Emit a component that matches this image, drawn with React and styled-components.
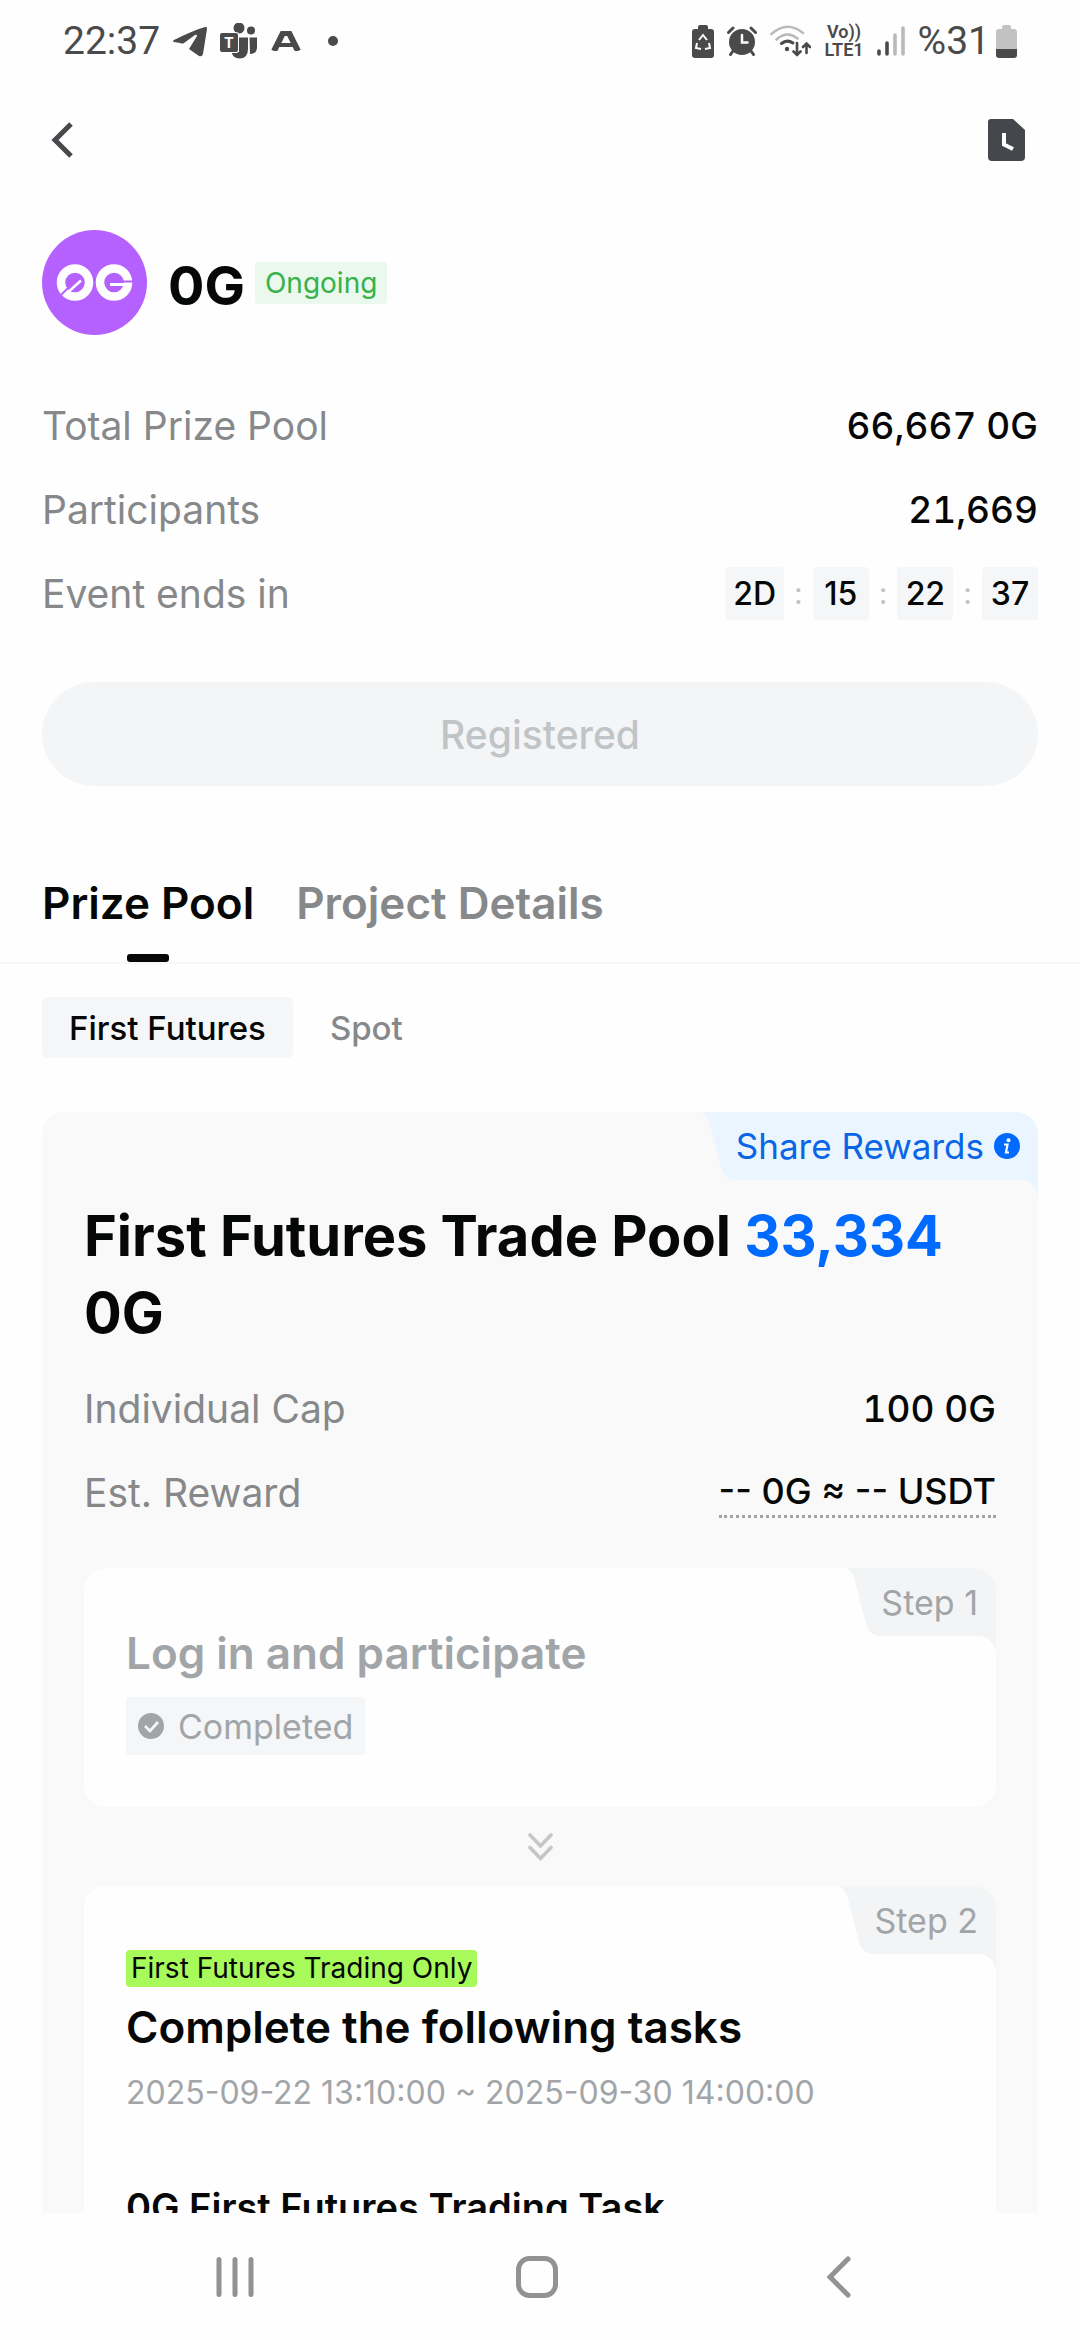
import React, { useState } from "react";
import styled, { createGlobalStyle } from "styled-components";

const GlobalStyle = createGlobalStyle`
  * {
    box-sizing: border-box;
  }
  body {
    margin: 0;
    background: #fefefe;
    color: #060707;
    font-family: Inter, "Liberation Sans", sans-serif;
  }
  button {
    margin: 0;
    padding: 0;
    border: 0;
    background: none;
    color: inherit;
    font: inherit;
  }
  h1, h2, h3, p, dl, dd {
    margin: 0;
  }
  svg {
    display: block;
    flex: none;
  }
`;

const Screen = styled.div`
  display: flex;
  flex-direction: column;
  height: 100vh;
`;

const StatusBar = styled.div`
  display: flex;
  flex: none;
  align-items: center;
  justify-content: space-between;
  height: 82px;
  padding: 0 63px;
  color: #4a4a4a;
  font-family: Roboto, sans-serif;
  font-size: 39px;
`;

const StatusGroup = styled.div`
  display: flex;
  align-items: center;
  gap: ${({ $gap }) => $gap}px;
`;

const Volte = styled.div`
  font-size: 18px;
  font-weight: 600;
  line-height: 18px;
  text-align: center;
`;

const Header = styled.header`
  display: flex;
  flex: none;
  align-items: center;
  justify-content: space-between;
  height: 116px;
  padding: 0 55px 0 50px;
`;

const Content = styled.main`
  flex: 1;
  min-height: 0;
  overflow: hidden;
`;

const Summary = styled.section`
  padding: 32px 42px 58px;
`;

const Project = styled.div`
  display: flex;
  align-items: center;
  margin-bottom: 48px;
`;

const ProjectName = styled.h1`
  margin: 0 10px 0 21px;
  padding-top: 6px;
  font-size: 54px;
  font-weight: 700;
`;

const Status = styled.span`
  padding: 0 10px;
  border-radius: 4px;
  background: #ebf8ed;
  color: #36b24a;
  font-size: 28px;
  line-height: 42px;
`;

const Row = styled.div`
  display: flex;
  align-items: center;
  justify-content: space-between;
  height: 84px;
  font-size: 39px;
`;

const Label = styled.dt`
  color: #86888a;
`;

const Value = styled.dd`
  font-size: 37px;
  font-weight: 500;
  font-variant-numeric: tabular-nums;
`;

const Estimate = styled(Value)`
  border-bottom: 3px dotted #a2a5a8;
  font-size: 36px;
  font-variant-numeric: normal;
  line-height: 48px;
`;

const Countdown = styled.dd`
  display: flex;
  align-items: center;
  gap: 10px;
  color: #c1c3c5;
  font-size: 30px;
`;

const TimeBox = styled.span`
  min-width: 56px;
  padding: 0 8px;
  border-radius: 4px;
  background: #f4f6f7;
  color: #060707;
  font-size: 32px;
  font-weight: 500;
  line-height: 53px;
  text-align: center;
`;

const RegisterButton = styled.button`
  width: 100%;
  height: 104px;
  margin-top: 47px;
  border-radius: 52px;
  background: #f4f5f7;
  color: #c1c4c7;
  font-size: 39px;
  font-weight: 500;
`;

const Tabs = styled.div`
  display: flex;
  gap: 42px;
  padding: 0 42px;
  border-bottom: 2px solid #f5f6f6;
`;

const Tab = styled.button`
  position: relative;
  height: 118px;
  color: ${({ $active }) => ($active ? "#060707" : "#86888a")};
  font-size: 44px;
  font-weight: 600;

  &::after {
    content: "";
    position: absolute;
    bottom: 0;
    left: 50%;
    width: 42px;
    height: 8px;
    margin-left: -21px;
    border-radius: 3px;
    background: ${({ $active }) => ($active ? "#060707" : "transparent")};
  }
`;

const Chips = styled.div`
  display: flex;
  gap: 10px;
  padding: 33px 42px 54px;
`;

const Chip = styled.button`
  height: 61px;
  padding: 0 27px;
  border-radius: 6px;
  background: ${({ $active }) => ($active ? "#f4f6f7" : "transparent")};
  color: ${({ $active }) => ($active ? "#060707" : "#86888a")};
  font-size: 33px;
  font-weight: 500;
`;

const PoolCard = styled.section`
  position: relative;
  margin: 0 42px;
  padding: 86px 42px 42px;
  border-radius: 22px;
  background: #f9f9f9;
`;

const PoolTitle = styled.h2`
  margin-bottom: 14px;
  font-size: 56px;
  font-weight: 700;
  line-height: 77px;

  em {
    color: #006aff;
    font-style: normal;
  }
`;

const StepCard = styled.article`
  position: relative;
  padding: 57px 42px 52px;
  border-radius: 22px;
  background: #fefefe;
`;

const Steps = styled.div`
  margin-top: 34px;
`;

const StepTitle = styled.h3`
  color: ${({ $done }) => ($done ? "#a2a5a8" : "#060707")};
  font-size: 44px;
  font-weight: 600;
  line-height: 56px;
`;

const StepGap = styled.div`
  display: flex;
  align-items: center;
  justify-content: center;
  height: 79px;
`;

const Completed = styled.div`
  display: inline-flex;
  align-items: center;
  gap: 14px;
  height: 58px;
  margin-top: 16px;
  padding: 0 12px;
  border-radius: 4px;
  background: #f4f6f7;
  color: #a2a5a8;
  font-size: 34px;
  vertical-align: top;
`;

const OnlyRow = styled.div`
  display: flex;
  align-items: center;
  height: 50px;
  margin-bottom: 6px;
`;

const Only = styled.mark`
  padding: 0 5px;
  border-radius: 4px;
  background: #a8fa5a;
  color: #060707;
  font-size: 28px;
  line-height: 37px;
`;

const Period = styled.p`
  margin: 18px 0 70px;
  color: #a2a5a8;
  font-size: 32px;
  line-height: 40px;
`;

const TaskTitle = styled.h3`
  font-size: 38px;
  font-weight: 600;
  line-height: 48px;
`;

const CornerWrap = styled.div`
  position: absolute;
  top: 0;
  right: 0;
  display: flex;
  color: ${({ $bg }) => $bg};
`;

const CornerBody = styled.div`
  position: relative;
  display: flex;
  align-items: center;
  gap: 10px;
  height: 68px;
  padding-right: 18px;
  border-top-right-radius: 22px;
  background: ${({ $bg }) => $bg};
  color: ${({ $color }) => $color};
  font-size: ${({ $size }) => $size}px;

  &::after {
    content: "";
    position: absolute;
    top: 100%;
    right: 0;
    width: 18px;
    height: 18px;
    background: radial-gradient(circle at 0 100%, transparent 18px, ${({ $bg }) => $bg} 18px);
  }
`;

const NavBar = styled.nav`
  display: grid;
  flex: none;
  grid-template-columns: repeat(3, 1fr);
  height: 127px;
  padding: 0 90px 0 84px;
  color: #929292;

  button {
    display: flex;
    align-items: center;
    justify-content: center;
  }
`;

const CornerTag = ({ bg, color, size, children }) => (
  <CornerWrap $bg={bg}>
    <svg width="36" height="68" viewBox="0 0 36 68" fill="currentColor">
      <path d="M0 0C7 2 9 8 11 17L20 52C22 62 27 68 36 68V0Z" />
    </svg>
    <CornerBody $bg={bg} $color={color} $size={size}>
      {children}
    </CornerBody>
  </CornerWrap>
);

const TelegramIcon = () => (
  <svg width="34" height="31" viewBox="0 0 34 31" fill="currentColor">
    <path d="M1 14C11 9 22 4 32 1Q34 0 34 3L30 28Q29 31 26 30L16 23L24 10Q24 8 22 9L11 17Q9 18 7 17L1 16Q-1 15 1 14Z" />
  </svg>
);

const TeamsIcon = () => (
  <svg width="38" height="36" viewBox="0 0 38 36" fill="currentColor">
    <circle cx="19" cy="5" r="5.5" />
    <circle cx="31" cy="7.500" r="4" />
    <path d="M29.500 14.500H37V24Q37 31 30 31Z" />
    <path d="M19 14.500H28V26Q28 35.500 19.500 35.500Q13 35.500 11.500 29H19Z" />
    <rect x="-1" y="9" width="20" height="21" rx="3" fill="#fefefe" />
    <rect x="0" y="10" width="18" height="19" rx="2" />
    <text x="9" y="25" fill="#fefefe" fontFamily="Roboto" fontSize="15" fontWeight="700" textAnchor="middle">
      T
    </text>
  </svg>
);

const WideAIcon = () => (
  <svg width="30" height="20" viewBox="0 0 30 20" fill="none" stroke="currentColor" strokeWidth="6">
    <path d="M3 20L12 2H18L27 20" />
    <path d="M8 14H22" strokeWidth="4" />
  </svg>
);

const RecycleBatteryIcon = () => (
  <svg width="22" height="33" viewBox="0 0 22 33" fill="currentColor">
    <rect x="6" y="0" width="10" height="6" rx="2" />
    <rect x="0" y="4" width="22" height="29" rx="3" />
    <path d="M7 15L11 10L15 15M17 18L18 23L13 24M9 24L4 23L5 18" fill="none" stroke="#fefefe" strokeWidth="2" />
    <path d="M11 13L16 22H6Z" />
  </svg>
);

const AlarmIcon = () => (
  <svg width="30" height="30" viewBox="0 0 30 30" fill="none" stroke="currentColor" strokeLinecap="round">
    <circle cx="15" cy="16" r="13" fill="currentColor" stroke="none" />
    <path d="M1.500 6.500L6 2M28.500 6.500L24 2M6 25L3.500 28.500M24 25L26.500 28.500" strokeWidth="3" />
    <path d="M15 9V16.500H20.500" stroke="#fefefe" strokeWidth="2.500" />
  </svg>
);

const WifiIcon = () => (
  <svg width="41" height="32" viewBox="0 0 41 32" fill="none" strokeWidth="2.600" strokeLinecap="round">
    <path d="M1.500 9Q17 -5 33 8M6.500 14.500Q17 5 27.500 13.500" stroke="#bababa" />
    <path d="M11.500 18.500Q17 14 23 18" stroke="currentColor" strokeWidth="3" />
    <circle cx="17" cy="24" r="2.200" fill="currentColor" />
    <path d="M27 18V30M23.500 26.500L27 30L30.500 26.500M36.500 28V18.500M33 22L36.500 18.500L40 22" stroke="currentColor" />
  </svg>
);

const SignalIcon = () => (
  <svg width="28" height="30" viewBox="0 0 28 30" strokeWidth="3.600" strokeLinecap="round">
    <path d="M2 25V28M10 17V28" stroke="currentColor" />
    <path d="M18 9V28M26 2V28" stroke="#bababa" />
  </svg>
);

const BatteryIcon = () => (
  <svg width="21" height="33" viewBox="0 0 21 33">
    <path d="M6 2Q6 0 8 0H13Q15 0 15 2V4H18Q21 4 21 7V24H0V7Q0 4 3 4H6Z" fill="#c2c2c2" />
    <path d="M0 24H21V30Q21 33 18 33H3Q0 33 0 30Z" fill="currentColor" />
  </svg>
);

const BackIcon = () => (
  <svg width="26" height="36" viewBox="0 0 26 36" fill="none" stroke="#48494c" strokeWidth="5">
    <path d="M21 2L5 18L21 34" />
  </svg>
);

const RecordIcon = () => (
  <svg width="37" height="42" viewBox="0 0 37 42">
    <path d="M3 0H25L37 11V38Q37 42 33 42H4Q0 42 0 38V3Q0 0 3 0Z" fill="#44474b" />
    <path d="M16 14V25.500L25 30" fill="none" stroke="#fefefe" strokeWidth="4" />
  </svg>
);

const TokenLogo = () => (
  <svg width="105" height="105" viewBox="0 0 105 105" fill="none">
    <circle cx="52.500" cy="52.500" r="52.500" fill="#b461ff" />
    <g stroke="#fefefe" strokeWidth="8.500">
      <circle cx="33" cy="52.500" r="14" />
      <circle cx="72" cy="52.500" r="14" />
    </g>
    <path d="M18 66L32 52" stroke="#b461ff" strokeWidth="2" />
    <path d="M23 65L39 50.500" stroke="#fefefe" strokeWidth="2.500" />
    <path d="M81 51.500H92" stroke="#b461ff" strokeWidth="2" />
    <path d="M68 54.500H84" stroke="#fefefe" strokeWidth="3" />
  </svg>
);

const InfoIcon = () => (
  <svg width="26" height="26" viewBox="0 0 26 26">
    <circle cx="13" cy="13" r="13" fill="#006aff" />
    <circle cx="14.500" cy="7.300" r="2" fill="#fefefe" />
    <path d="M10 11.500H13.500L12 19.500H15" fill="none" stroke="#fefefe" strokeWidth="2.200" />
  </svg>
);

const CheckIcon = () => (
  <svg width="26" height="26" viewBox="0 0 26 26">
    <circle cx="13" cy="13" r="13" fill="#a2a5a8" />
    <path d="M7 13L12 18L20 9" fill="none" stroke="#f4f6f7" strokeWidth="2.800" />
  </svg>
);

const DoubleDownIcon = () => (
  <svg width="25" height="28" viewBox="0 0 25 28" fill="none" stroke="#c4c6c8" strokeWidth="3.600" strokeLinecap="round">
    <path d="M2 2L12.500 13L23 2M2 14.500L12.500 25.500L23 14.500" />
  </svg>
);

const RecentsIcon = () => (
  <svg width="38" height="42" viewBox="0 0 38 42" stroke="currentColor" strokeWidth="5" strokeLinecap="round">
    <path d="M3 3.500V38.500M19 3.500V38.500M35 3.500V38.500" />
  </svg>
);

const HomeIcon = () => (
  <svg width="42" height="42" viewBox="0 0 42 42" fill="none" stroke="currentColor" strokeWidth="5">
    <rect x="2.500" y="2.500" width="37" height="37" rx="11" />
  </svg>
);

const NavBackIcon = () => (
  <svg width="24" height="42" viewBox="0 0 24 42" fill="none" stroke="currentColor" strokeWidth="5" strokeLinecap="round">
    <path d="M21 3L3 21L21 39" />
  </svg>
);

const time = ["2D", "15", "22", "37"];
const tabs = ["Prize Pool", "Project Details"];
const pools = ["First Futures", "Spot"];

const App = () => {
  const [tab, setTab] = useState(tabs[0]);
  const [pool, setPool] = useState(pools[0]);

  return (
    <Screen>
      <GlobalStyle />
      <StatusBar>
        <StatusGroup $gap={13}>
          <span>22:37</span>
          <TelegramIcon />
          <TeamsIcon />
          <WideAIcon />
          <svg width="38" height="10" viewBox="0 0 38 10" fill="currentColor">
            <circle cx="19" cy="5" r="5" />
          </svg>
        </StatusGroup>
        <StatusGroup $gap={13}>
          <RecycleBatteryIcon />
          <AlarmIcon />
          <WifiIcon />
          <Volte>
            Vo))
            <br />
            LTE1
          </Volte>
          <SignalIcon />
          <StatusGroup $gap={6}>
            <span>%31</span>
            <BatteryIcon />
          </StatusGroup>
        </StatusGroup>
      </StatusBar>
      <Header>
        <button aria-label="Back">
          <BackIcon />
        </button>
        <button aria-label="Records">
          <RecordIcon />
        </button>
      </Header>
      <Content>
        <Summary>
          <Project>
            <TokenLogo />
            <ProjectName>0G</ProjectName>
            <Status>Ongoing</Status>
          </Project>
          <dl>
            <Row>
              <Label>Total Prize Pool</Label>
              <Value>66,667 0G</Value>
            </Row>
            <Row>
              <Label>Participants</Label>
              <Value>21,669</Value>
            </Row>
            <Row>
              <Label>Event ends in</Label>
              <Countdown>
                {time.map((part, i) => (
                  <React.Fragment key={part}>
                    {i > 0 && <span>:</span>}
                    <TimeBox>{part}</TimeBox>
                  </React.Fragment>
                ))}
              </Countdown>
            </Row>
          </dl>
          <RegisterButton>Registered</RegisterButton>
        </Summary>
        <Tabs>
          {tabs.map(name => (
            <Tab key={name} $active={name === tab} onClick={() => setTab(name)}>
              {name}
            </Tab>
          ))}
        </Tabs>
        <Chips>
          {pools.map(name => (
            <Chip key={name} $active={name === pool} onClick={() => setPool(name)}>
              {name}
            </Chip>
          ))}
        </Chips>
        <PoolCard>
          <CornerTag bg="#ebf5ff" color="#0a66e4" size={35}>
            Share Rewards
            <InfoIcon />
          </CornerTag>
          <PoolTitle>
            First Futures Trade Pool <em>33,334</em> 0G
          </PoolTitle>
          <dl>
            <Row>
              <Label>Individual Cap</Label>
              <Value>100 0G</Value>
            </Row>
            <Row>
              <Label>Est. Reward</Label>
              <Estimate>-- 0G ≈ -- USDT</Estimate>
            </Row>
          </dl>
          <Steps>
            <StepCard>
              <CornerTag bg="#f2f4f5" color="#a2a5a8" size={34}>
                Step 1
              </CornerTag>
              <StepTitle $done>Log in and participate</StepTitle>
              <Completed>
                <CheckIcon />
                Completed
              </Completed>
            </StepCard>
            <StepGap>
              <DoubleDownIcon />
            </StepGap>
            <StepCard>
              <CornerTag bg="#f2f4f5" color="#a2a5a8" size={34}>
                Step 2
              </CornerTag>
              <OnlyRow>
                <Only>First Futures Trading Only</Only>
              </OnlyRow>
              <StepTitle>Complete the following tasks</StepTitle>
              <Period>2025-09-22 13:10:00 ~ 2025-09-30 14:00:00</Period>
              <TaskTitle>0G First Futures Trading Task</TaskTitle>
            </StepCard>
          </Steps>
        </PoolCard>
      </Content>
      <NavBar>
        <button aria-label="Recents">
          <RecentsIcon />
        </button>
        <button aria-label="Home">
          <HomeIcon />
        </button>
        <button aria-label="Go back">
          <NavBackIcon />
        </button>
      </NavBar>
    </Screen>
  );
};

export default App;
